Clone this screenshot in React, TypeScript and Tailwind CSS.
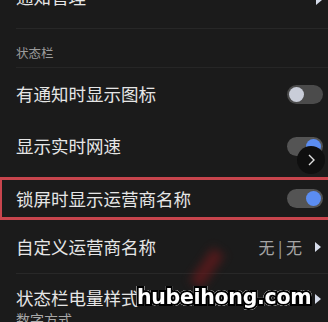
import React from "react";

const font = { fontFamily: '"Noto Sans CJK SC", "Noto Sans", sans-serif' };

function Arrow() {
  return (
    <svg width="6" height="10" viewBox="0 0 6 10" className="shrink-0">
      <path d="M0 0 L6 5 L0 10 Z" fill="#d6dcea" />
    </svg>
  );
}

function Toggle({ on }: { on: boolean }) {
  return (
    <div
      className={`flex h-[19px] w-[36px] items-center rounded-full px-[2px] ${
        on ? "justify-end bg-[#545454]" : "justify-start bg-[#4b4b4b]"
      }`}
    >
      <div
        className={`h-[15px] w-[15px] rounded-full ${
          on ? "bg-[#5b8df2]" : "bg-[#c9cdd8]"
        }`}
      />
    </div>
  );
}

function Row({
  label,
  right,
  className = "",
}: {
  label: string;
  right: React.ReactNode;
  className?: string;
}) {
  return (
    <div className={`flex items-center justify-between pl-4 pr-[5px] ${className}`}>
      <span className="text-[17.5px] leading-none text-[#e6e6e6]">{label}</span>
      {right}
    </div>
  );
}

export default function App() {
  return (
    <div
      className="relative h-[322px] w-[328px] overflow-hidden bg-[#1b1b1b]"
      style={font}
    >
      <div className="ml-4 -mt-[34px] flex h-[63px] items-center justify-between border-b border-[#272727] pr-[6px]">
        <span className="text-[17.5px] leading-none text-[#e6e6e6]">通知管理</span>
        <div className="mt-[6px]">
          <Arrow />
        </div>
      </div>

      <div className="ml-4 h-[39px] border-b border-[#262626] pt-[17px]">
        <span className="block text-[12.5px] leading-[14px] text-[#9c9c9c]">状态栏</span>
      </div>

      <Row label="有通知时显示图标" right={<Toggle on={false} />} className="h-[52px]" />
      <Row label="显示实时网速" right={<Toggle on={true} />} className="h-[52px]" />

      <div className="mt-[5px] h-[43px] border-y-[3px] border-l-2 border-[#c8454d]">
        <Row label="锁屏时显示运营商名称" right={<Toggle on={true} />} className="h-full pl-[14px]" />
      </div>

      <div className="flex h-[53px] items-center justify-between pl-4 pr-[7px]">
        <span className="text-[17.5px] leading-none text-[#e6e6e6]">自定义运营商名称</span>
        <div className="flex items-center gap-[13px]">
          <span className="text-[16px] leading-none text-[#a6a6a6]">无 | 无</span>
          <Arrow />
        </div>
      </div>
      <div className="ml-4 border-b border-[#282828]" />

      <div className="flex items-start justify-between pl-4 pr-[7px] pt-[14px]">
        <div className="flex flex-col">
          <span className="text-[17.5px] leading-[20px] text-[#e6e6e6]">状态栏电量样式</span>
          <span className="mt-[3px] text-[14px] leading-[16px] text-[#a8a8a8]">数字方式</span>
        </div>
        <div className="mt-[6px]">
          <Arrow />
        </div>
      </div>

      {/* floating chevron button */}
      <div className="absolute left-[297px] top-[146px] flex h-[28px] w-[28px] items-center justify-center rounded-full bg-[#0f0f0f]">
        <svg width="10" height="12" viewBox="0 0 10 12">
          <path d="M3 1 L8 6 L3 11" fill="none" stroke="#e0e0e0" strokeWidth="1.4" />
        </svg>
      </div>

      {/* watermark */}
      <div className="pointer-events-none absolute left-[200px] top-[248px] h-[40px] w-[14px] rotate-[35deg] bg-[#6a1a1c] opacity-70 blur-[5px]" />
      <div
        className="pointer-events-none absolute left-[137px] top-[287px] text-[20.5px] font-black leading-none tracking-[-0.3px] text-white [-webkit-text-stroke:4px_#000] [paint-order:stroke_fill] [filter:drop-shadow(0_0_0.6px_#fff)_drop-shadow(0_0_0.6px_#fff)]"
        style={{ fontFamily: '"DejaVu Sans", sans-serif' }}
      >
        hubeihong.com
      </div>
    </div>
  );
}
